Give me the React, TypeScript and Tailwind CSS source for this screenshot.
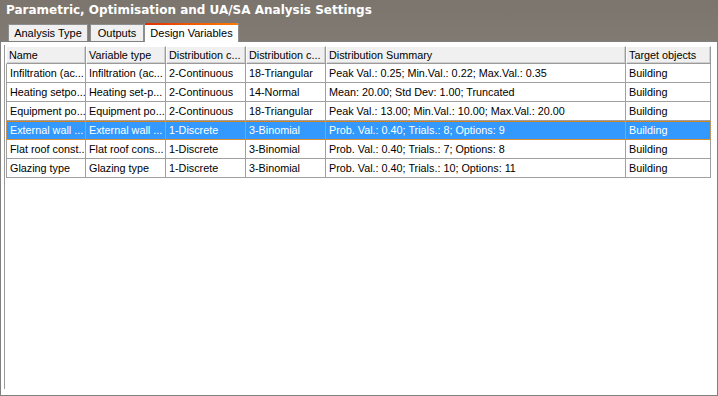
import React from "react";

const cols = [80, 80, 80, 80, 300, 85];

const headers = [
  "Name",
  "Variable type",
  "Distribution c...",
  "Distribution c...",
  "Distribution Summary",
  "Target objects",
];

const rows = [
  ["Infiltration (ac...", "Infiltration (ac...", "2-Continuous", "18-Triangular", "Peak Val.: 0.25; Min.Val.: 0.22; Max.Val.: 0.35", "Building"],
  ["Heating setpo...", "Heating set-p...", "2-Continuous", "14-Normal", "Mean: 20.00; Std Dev: 1.00; Truncated", "Building"],
  ["Equipment po...", "Equipment po...", "2-Continuous", "18-Triangular", "Peak Val.: 13.00; Min.Val.: 10.00; Max.Val.: 20.00", "Building"],
  ["External wall ...", "External wall ...", "1-Discrete", "3-Binomial", "Prob. Val.: 0.40; Trials.: 8; Options: 9", "Building"],
  ["Flat roof const...", "Flat roof cons...", "1-Discrete", "3-Binomial", "Prob. Val.: 0.40; Trials.: 7; Options: 8", "Building"],
  ["Glazing type", "Glazing type", "1-Discrete", "3-Binomial", "Prob. Val.: 0.40; Trials.: 10; Options: 11", "Building"],
];

const selected = 3;

export default function App() {
  return (
    <div
      className="w-[718px] h-[396px] flex flex-col bg-gradient-to-b from-[#7b756d] to-[#aaa9a6] overflow-hidden"
      style={{ fontFamily: '"Liberation Sans", Arial, sans-serif' }}
    >
      <div
        className="h-[22px] pl-[6px] pt-[1px] text-white font-bold text-[12px] leading-[18px]"
        style={{ fontFamily: '"DejaVu Sans", Verdana, sans-serif' }}
      >
        Parametric, Optimisation and UA/SA Analysis Settings
      </div>

      <div className="h-[19px] flex items-end pl-[8px] text-[11px]">
        <div className="h-[17px] w-[80px] bg-[#f0f0f0] border border-b-0 border-[#8e8e8e] flex items-center justify-center text-black">
          Analysis Type
        </div>
        <div className="h-[17px] w-[54px] ml-[2px] bg-[#f0f0f0] border border-b-0 border-[#8e8e8e] flex items-center justify-center text-black">
          Outputs
        </div>
        <div className="h-[19px] w-[95px] bg-white border-x border-[#8e8e8e] flex flex-col text-black -mb-px relative z-10">
          <div className="h-[2px] bg-gradient-to-r from-[#e03000] to-[#ff7a00]" />
          <div className="flex-1 flex items-center justify-center">Design Variables</div>
        </div>
      </div>

      <div className="flex-1 bg-white border border-[#808080] pl-[3px] pt-[3px] pb-[6px] flex">
        <div className="flex-1 border-l border-[#9a9a9a] pl-[1px] pt-[1px] text-[10.8px] text-black">
          <div className="flex h-[18px] w-fit">
            {headers.map((h, i) => (
              <div
                key={i}
                style={{ width: cols[i] }}
                className="bg-[#f0f0f0] border border-[#9a9a9a] border-l-white border-t-white shadow-[inset_-1px_-1px_0_#d0d0d0] pl-[2px] leading-[16px] whitespace-nowrap overflow-hidden"
              >
                {h}
              </div>
            ))}
          </div>
          {rows.map((r, ri) => (
            <div
              key={ri}
              className={
                "flex h-[19px] w-fit relative " +
                (ri === selected ? "bg-[#3399ff] text-white" : "")
              }
            >
              {r.map((c, ci) => (
                <div
                  key={ci}
                  style={{ width: cols[ci] }}
                  className={
                    "border-r border-b border-[#a0a0a0] pl-[3px] leading-[18px] whitespace-nowrap overflow-hidden " +
                    (ci === 0 ? "border-l" : "")
                  }
                >
                  {c}
                </div>
              ))}
              {ri === selected && (
                <div className="absolute inset-0 border border-dotted border-[#d98a2b]" />
              )}
            </div>
          ))}
        </div>
      </div>
    </div>
  );
}
